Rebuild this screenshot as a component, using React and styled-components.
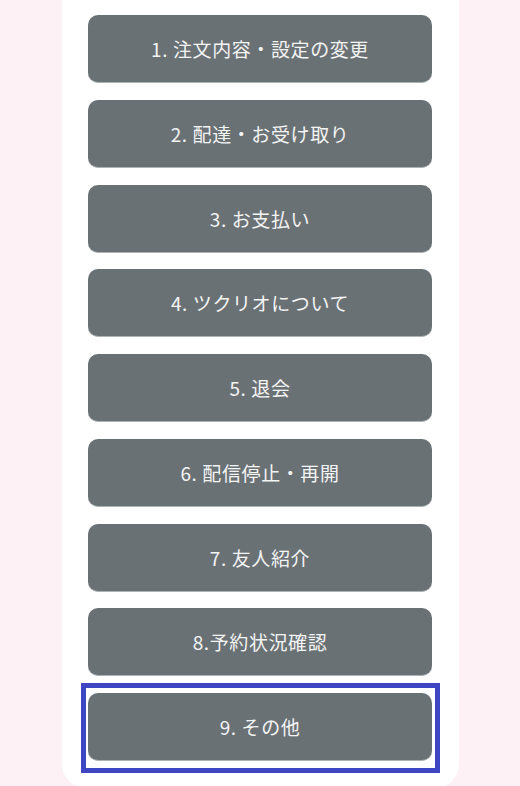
import React from "react";
import styled, { createGlobalStyle } from "styled-components";

const Global = createGlobalStyle`
  html, body { margin: 0; padding: 0; background: #fdf1f6; }
  body { font-family: "Noto Sans CJK JP", "Noto Sans", sans-serif; }
`;

const Page = styled.div`
  display: flex;
  justify-content: center;
  min-height: 786px;
`;

const Card = styled.div`
  width: 397px;
  background: #ffffff;
  border-radius: 0 0 24px 24px;
  padding: 15px 0 27px;
  box-sizing: border-box;
  display: flex;
  flex-direction: column;
  align-items: center;
  gap: 16.75px;
`;

const Item = styled.a`
  position: relative;
  display: block;
  text-decoration: none;
  ${(p) =>
    p.$focused &&
    `
    &::after {
      content: "";
      position: absolute;
      top: -10px;
      left: -7px;
      right: -8px;
      bottom: -12px;
      border: 5px solid #3f46c3;
      pointer-events: none;
    }
  `}
`;

const Button = styled.div`
  width: 344px;
  height: 68px;
  box-sizing: border-box;
  border-radius: 10px;
  background: #6a7175;
  border-bottom: 1px solid #aeb3b6;
  color: #f3f4f4;
  font-size: 19px;
  letter-spacing: 0.6px;
  display: flex;
  align-items: center;
  justify-content: center;
`;

const items = [
  "1. 注文内容・設定の変更",
  "2. 配達・お受け取り",
  "3. お支払い",
  "4. ツクリオについて",
  "5. 退会",
  "6. 配信停止・再開",
  "7. 友人紹介",
  "8.予約状況確認",
  "9. その他",
];

export default function App() {
  return (
    <>
      <Global />
      <Page>
        <Card>
          {items.map((t, i) => (
            <Item key={t} href="#" $focused={i === items.length - 1}>
              <Button>{t}</Button>
            </Item>
          ))}
        </Card>
      </Page>
    </>
  );
}
